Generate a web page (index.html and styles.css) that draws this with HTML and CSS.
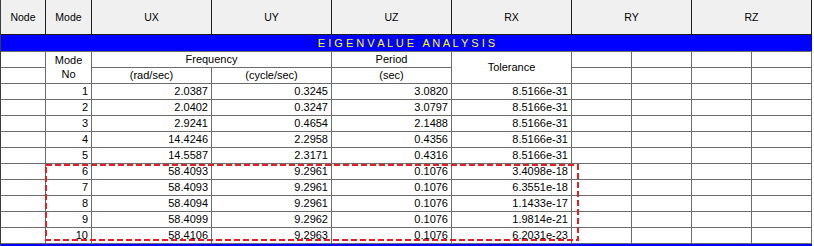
FILE: index.html
```html
<!DOCTYPE html>
<html>
<head>
<meta charset="utf-8">
<link rel="stylesheet" href="styles.css">
</head>
<body>
<div class="sheet">
  <div class="hdr">
    <div class="hc">Node</div>
    <div class="hc">Mode</div>
    <div class="hc">UX</div>
    <div class="hc">UY</div>
    <div class="hc">UZ</div>
    <div class="hc">RX</div>
    <div class="hc">RY</div>
    <div class="hc">RZ</div>
  </div>
  <div class="band">E I G E N V A L U E   A N A L Y S I S</div>
  <div class="grid">
    <div class="c"></div>
    <div class="c ctr two rs2">Mode<br>No</div>
    <div class="c ctr cs2">Frequency</div>
    <div class="c ctr">Period</div>
    <div class="c ctr rs2">Tolerance</div>
    <div class="c"></div><div class="c"></div><div class="c"></div><div class="c"></div>

    <div class="c"></div>
    <div class="c ctr">(rad/sec)</div>
    <div class="c ctr">(cycle/sec)</div>
    <div class="c ctr">(sec)</div>
    <div class="c"></div><div class="c"></div><div class="c"></div><div class="c"></div>

    <div class="c"></div><div class="c num">1</div><div class="c num">2.0387</div><div class="c num">0.3245</div><div class="c num">3.0820</div><div class="c num">8.5166e-31</div><div class="c"></div><div class="c"></div><div class="c"></div><div class="c"></div>
    <div class="c"></div><div class="c num">2</div><div class="c num">2.0402</div><div class="c num">0.3247</div><div class="c num">3.0797</div><div class="c num">8.5166e-31</div><div class="c"></div><div class="c"></div><div class="c"></div><div class="c"></div>
    <div class="c"></div><div class="c num">3</div><div class="c num">2.9241</div><div class="c num">0.4654</div><div class="c num">2.1488</div><div class="c num">8.5166e-31</div><div class="c"></div><div class="c"></div><div class="c"></div><div class="c"></div>
    <div class="c"></div><div class="c num">4</div><div class="c num">14.4246</div><div class="c num">2.2958</div><div class="c num">0.4356</div><div class="c num">8.5166e-31</div><div class="c"></div><div class="c"></div><div class="c"></div><div class="c"></div>
    <div class="c"></div><div class="c num">5</div><div class="c num">14.5587</div><div class="c num">2.3171</div><div class="c num">0.4316</div><div class="c num">8.5166e-31</div><div class="c"></div><div class="c"></div><div class="c"></div><div class="c"></div>
    <div class="c"></div><div class="c num">6</div><div class="c num">58.4093</div><div class="c num">9.2961</div><div class="c num">0.1076</div><div class="c num">3.4098e-18</div><div class="c"></div><div class="c"></div><div class="c"></div><div class="c"></div>
    <div class="c"></div><div class="c num">7</div><div class="c num">58.4093</div><div class="c num">9.2961</div><div class="c num">0.1076</div><div class="c num">6.3551e-18</div><div class="c"></div><div class="c"></div><div class="c"></div><div class="c"></div>
    <div class="c"></div><div class="c num">8</div><div class="c num">58.4094</div><div class="c num">9.2961</div><div class="c num">0.1076</div><div class="c num">1.1433e-17</div><div class="c"></div><div class="c"></div><div class="c"></div><div class="c"></div>
    <div class="c"></div><div class="c num">9</div><div class="c num">58.4099</div><div class="c num">9.2962</div><div class="c num">0.1076</div><div class="c num">1.9814e-21</div><div class="c"></div><div class="c"></div><div class="c"></div><div class="c"></div>
    <div class="c"></div><div class="c num">10</div><div class="c num">58.4106</div><div class="c num">9.2963</div><div class="c num">0.1076</div><div class="c num">6.2031e-23</div><div class="c"></div><div class="c"></div><div class="c"></div><div class="c"></div>
  </div>
  <div class="endline"></div>
  <svg class="marquee" width="812" height="250" viewBox="0 0 812 250">
    <rect x="46" y="165" width="532" height="75" fill="none" stroke="#e81c24" stroke-width="2" stroke-dasharray="6 3"/>
  </svg>
</div>
</body>
</html>
```

FILE: styles.css
```css
html, body {
  margin: 0;
  padding: 0;
  background: #ffffff;
}

.sheet {
  position: relative;
  width: 811px;
  border-left: 1px solid #3c3c3c;
  font-family: "Liberation Sans", Arial, sans-serif;
  font-size: 11px;
  color: #000;
}

.hdr {
  display: grid;
  grid-template-columns: 45px 46px 120px 120px 120px 120px 120px 120px;
  height: 35px;
}

.hc {
  box-sizing: border-box;
  background: #f0f0f0;
  border-right: 1px solid #1e1e1e;
  border-bottom: 1px solid #1e1e1e;
  display: flex;
  align-items: center;
  justify-content: center;
  font-size: 10.5px;
  padding-bottom: 1px;
}

.band {
  box-sizing: border-box;
  height: 17px;
  background: #0000ff;
  border-bottom: 1px solid #6d6d6d;
  color: #ffff00;
  text-align: center;
  white-space: pre;
  line-height: 16px;
  font-size: 11px;
}

.grid {
  display: grid;
  grid-template-columns: 45px 46px 120px 120px 120px 120px 60px 60px 60px 60px;
  grid-auto-rows: 16px;
}

.c {
  box-sizing: border-box;
  background: #fff;
  border-right: 1px solid #6d6d6d;
  border-bottom: 1px solid #6d6d6d;
  line-height: 15px;
  white-space: nowrap;
  overflow: hidden;
}

.num {
  text-align: right;
  padding-right: 3px;
}

.ctr {
  text-align: center;
}

.cs2 { grid-column: span 2; }

.rs2 {
  grid-row: span 2;
  display: flex;
  align-items: center;
  justify-content: center;
}

.two {
  line-height: 14px;
  text-align: center;
  padding-bottom: 1px;
}

.endline {
  height: 3px;
  background: #0000ff;
}

.marquee {
  position: absolute;
  left: -1px;
  top: 0;
  pointer-events: none;
}
```
